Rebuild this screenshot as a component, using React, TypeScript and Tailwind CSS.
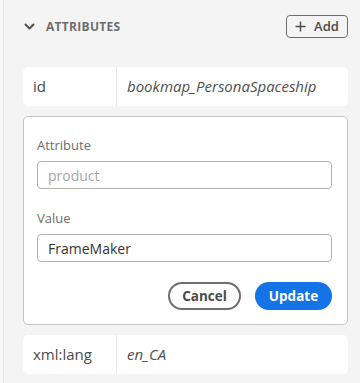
import React from 'react';

const font = { fontFamily: '"Open Sans", "Noto Sans", sans-serif' };

// One key/value row of the attribute table
const AttrRow = ({ name, value }: { name: string; value: string }) => (
    <div className="flex h-[39px] items-stretch rounded-[5px] bg-white">
        <div className="flex w-[94px] items-center border-r border-[#e8e8e8] pl-[10px] text-[15px] text-[#4b4b4b]">
            {name}
        </div>
        <div className="flex flex-1 items-center pl-[10px] text-[15px] italic text-[#505050]">
            {value}
        </div>
    </div>
);

const Field = ({ label, value, placeholder }: { label: string; value?: string; placeholder?: string }) => (
    <div className="flex flex-col">
        <label className="h-[20px] text-[13px] leading-[20px] text-[#6e6e6e]">{label}</label>
        <input
            readOnly
            defaultValue={value}
            placeholder={placeholder}
            className="mt-[6px] h-[28px] w-full rounded-[4px] border border-[#b3b3b3] bg-white px-[10px] text-[14px] text-[#323232] placeholder:text-[#a8a8a8] focus:outline-none"
        />
    </div>
);

export default function App() {
    return (
        <div className="h-[383px] w-[360px] bg-[#f8f8f8] pl-[3px]" style={font}>
            <div className="h-full border-l border-[#e6e6e6] bg-[#f4f4f4] pl-[19px] pr-[12px] pt-[15px]">
                {/* Section header */}
                <div className="flex h-[23px] items-center justify-between">
                    <div className="flex items-center">
                        <svg width="11" height="8" viewBox="0 0 11 8" className="ml-[1px]">
                            <path d="M1.5 1.5 L5.5 5.5 L9.5 1.5" fill="none" stroke="#505050" strokeWidth="2" strokeLinecap="round" strokeLinejoin="round" />
                        </svg>
                        <span className="ml-[11px] text-[12px] font-bold tracking-[0.3px] text-[#6e6e6e]">ATTRIBUTES</span>
                    </div>
                    <button className="flex h-[23px] w-[62px] items-center justify-center gap-[8px] rounded-[4px] border border-[#6e6e6e] bg-transparent text-[13px] font-semibold text-[#4b4b4b]">
                        <svg width="11" height="11" viewBox="0 0 11 11">
                            <path d="M5.5 0.5 V10.5 M0.5 5.5 H10.5" stroke="#4b4b4b" strokeWidth="1.4" />
                        </svg>
                        Add
                    </button>
                </div>

                <div className="mt-[29px] flex flex-col gap-[10px]">
                    <AttrRow name="id" value="bookmap_PersonaSpaceship" />

                    {/* Edit form */}
                    <div className="flex flex-col rounded-[5px] border border-[#c4c4c4] bg-white pb-[14px] pl-[13px] pr-[15px] pt-[18px]">
                        <Field label="Attribute" placeholder="product" />
                        <div className="mt-[19px]">
                            <Field label="Value" value="FrameMaker" />
                        </div>
                        <div className="mt-[20px] flex justify-end gap-[14px]">
                            <button className="h-[28px] w-[73px] rounded-full border-2 border-[#6e6e6e] text-[13.5px] font-bold text-[#4b4b4b]">
                                Cancel
                            </button>
                            <button className="h-[28px] w-[77px] rounded-full bg-[#1473e6] text-[13.5px] font-bold text-white">
                                Update
                            </button>
                        </div>
                    </div>

                    <AttrRow name="xml:lang" value="en_CA" />
                </div>
            </div>
        </div>
    );
}
